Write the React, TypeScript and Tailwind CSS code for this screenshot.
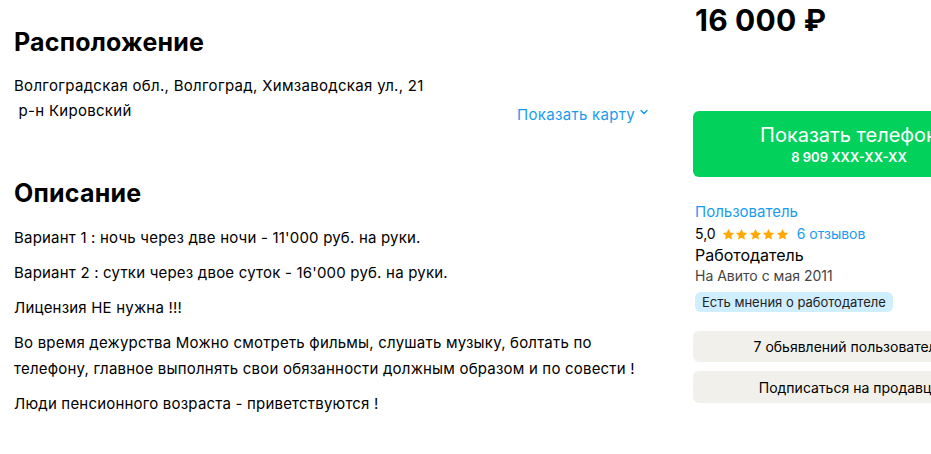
import { ChevronDown } from "lucide-react";

const paragraphs = [
  "Вариант 1 : ночь через две ночи - 11'000 руб. на руки.",
  "Вариант 2 : сутки через двое суток - 16'000 руб. на руки.",
  "Лицензия НЕ нужна !!!",
  "Во время дежурства Можно смотреть фильмы, слушать музыку, болтать по телефону, главное выполнять свои обязанности должным образом и по совести !",
  "Люди пенсионного возраста - приветствуются !",
];

const Star = () => (
  <svg width="13" height="13" viewBox="0 0 24 24" className="fill-[#ffa800]">
    <path d="M12 1.8l3.1 6.6 7.2.9-5.3 5 1.4 7.1L12 17.9l-6.4 3.5L7 14.3l-5.3-5 7.2-.9z" />
  </svg>
);

const App = () => {
  return (
    <div className="w-[931px] h-[454px] overflow-hidden bg-white text-black font-['Inter',sans-serif]">
      <div className="flex">
        {/* Left column */}
        <div className="w-[636px] ml-[14px] shrink-0">
          <h2 className="pt-[26px] text-[25px] leading-[32px] font-bold tracking-[0.2px]">Расположение</h2>

          <div className="mt-[15px] flex items-end justify-between">
            <div className="text-[15px] leading-[25px] tracking-[0.3px]">
              <div>Волгоградская обл., Волгоград, Химзаводская ул., 21</div>
              <div>&nbsp;р-н Кировский</div>
            </div>
            <button className="flex items-center gap-[3px] text-[15px] leading-[25px] tracking-[0.3px] text-[#1a9bf0] -mb-[4px]">
              Показать карту
              <ChevronDown size={12} strokeWidth={3} className="-mt-[6px]" />
            </button>
          </div>

          <h2 className="mt-[54px] text-[25px] leading-[32px] font-bold tracking-[0.2px]">Описание</h2>

          <div className="mt-[16px] flex flex-col gap-[9px] text-[15px] leading-[26px] tracking-[0.2px]">
            {paragraphs.map((p) => (
              <p key={p}>{p}</p>
            ))}
          </div>
        </div>

        {/* Right column */}
        <div className="ml-[43px] w-[312px] shrink-0">
          <div className="text-[30px] leading-[40px] font-bold tracking-[0.2px] ml-[2px]">16 000 ₽</div>

          <button className="mt-[71px] w-full h-[66px] rounded-[6px] bg-[#02d15c] text-white flex flex-col items-center justify-center">
            <span className="text-[20px] leading-[26px]">Показать телефон</span>
            <span className="text-[13px] leading-[18px] font-semibold">8 909 XXX-XX-XX</span>
          </button>

          <div className="mt-[24px] ml-[2px]">
            <div className="text-[15px] leading-[22px] text-[#1a9bf0]">Пользователь</div>
            <div className="flex items-center text-[14px] leading-[22px]">
              <span>5,0</span>
              <span className="flex ml-[6px] gap-[0.5px]">
                <Star />
                <Star />
                <Star />
                <Star />
                <Star />
              </span>
              <span className="ml-[8px] text-[#1a9bf0]">6 отзывов</span>
            </div>
            <div className="text-[16px] leading-[21px]">Работодатель</div>
            <div className="text-[14px] leading-[20px] text-[#444]">На Авито с мая 2011</div>
            <div className="mt-[6px] inline-block rounded-[6px] bg-[#cfeeff] px-[7px] text-[13px] leading-[20px] text-[#222]">
              Есть мнения о работодателе
            </div>
          </div>

          <div className="mt-[18px] flex flex-col gap-[9px]">
            <button className="h-[31px] w-full rounded-[6px] bg-[#f2f0eb] text-[14px]">
              7 обьявлений пользователя
            </button>
            <button className="h-[32px] w-full rounded-[6px] bg-[#f2f0eb] text-[14px]">
              Подписаться на продавца
            </button>
          </div>
        </div>
      </div>
    </div>
  );
};

export default App;
